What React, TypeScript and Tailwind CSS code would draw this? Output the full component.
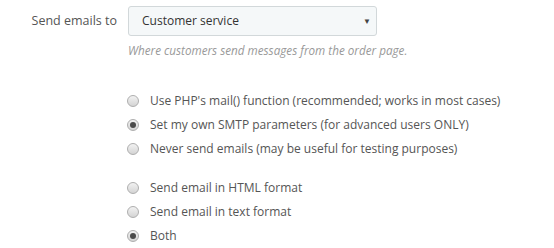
import React from "react";

function Radio({ label, checked }: { label: string; checked?: boolean }) {
  return (
    <label className="flex items-center h-[24px] gap-[11px]">
      <span className="w-[12px] h-[12px] rounded-full border border-[#aeaeae] bg-gradient-to-b from-[#f2f2f2] to-[#d4d4d4] flex items-center justify-center">
        {checked && <span className="w-[6px] h-[6px] rounded-full bg-[#4a4a4a]" />}
      </span>
      <span>{label}</span>
    </label>
  );
}

export default function App() {
  const methods = [
    { label: "Use PHP's mail() function (recommended; works in most cases)" },
    { label: "Set my own SMTP parameters (for advanced users ONLY)", checked: true },
    { label: "Never send emails (may be useful for testing purposes)" },
  ];
  const formats = [
    { label: "Send email in HTML format" },
    { label: "Send email in text format" },
    { label: "Both", checked: true },
  ];

  return (
    <div className="w-[554px] h-[248px] bg-white text-[12px] text-[#555] font-['Open_Sans',sans-serif]">
      <div className="flex items-start pt-[6px]">
        <div className="w-[128px] pr-[11px] text-right text-[12.5px] leading-[30px]">Send emails to</div>
        <div>
          <div className="w-[249px] h-[30px] border border-[#d2d8da] rounded-[3px] bg-[#f5f8f9] flex items-center justify-between pl-[13px] pr-[5px] text-[#333]">
            <span>Customer service</span>
            <span className="text-[8px] text-[#444]">▼</span>
          </div>
          <div className="mt-[4px] italic text-[11.7px] text-[#999] leading-[20px]">Where customers send messages from the order page.</div>
        </div>
      </div>

      <div className="pl-[127px] mt-[29px] flex flex-col">
        {methods.map(m => <Radio key={m.label} label={m.label} checked={m.checked} />)}
      </div>
      <div className="pl-[127px] mt-[15px] flex flex-col">
        {formats.map(m => <Radio key={m.label} label={m.label} checked={m.checked} />)}
      </div>
    </div>
  );
}
